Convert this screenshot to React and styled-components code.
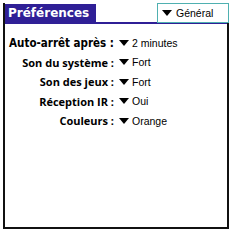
import React from 'react';
import styled, { createGlobalStyle } from 'styled-components';

const Global = createGlobalStyle`
  html, body { margin: 0; padding: 0; background: #fff; }
  body { width: 231px; height: 231px; overflow: hidden; }
`;

const rows = [
  { label: 'Auto-arrêt après', value: '2 minutes', wide: true },
  { label: 'Son du système', value: 'Fort' },
  { label: 'Son des jeux', value: 'Fort' },
  { label: 'Réception IR', value: 'Oui' },
  { label: 'Couleurs', value: 'Orange' },
];

const App = () => {
  return (
    <>
      <Global />
      <Screen>
        <Header>
          <Title>Préférences</Title>
          <Trigger>
            <Arrow />
            Général
          </Trigger>
        </Header>
        <Form>
          {rows.map((r) => (
            <React.Fragment key={r.label}>
              <Label $wide={r.wide}>{r.label} :</Label>
              <Value>
                <Arrow />
                {r.value}
              </Value>
            </React.Fragment>
          ))}
        </Form>
      </Screen>
    </>
  );
};

const Screen = styled.div`
  box-sizing: border-box;
  margin: 3px 2px 2px 3px;
  width: 226px;
  height: 226px;
  border-left: 2px solid #111;
  border-right: 2px solid #111;
  border-bottom: 2px solid #111;
  display: flex;
  flex-direction: column;
  font-family: 'DejaVu Sans', sans-serif;
  color: #000;
`;

const Header = styled.div`
  display: flex;
  align-items: flex-end;
  height: 19px;
  border-bottom: 2px solid #2f1f96;
`;

const Title = styled.div`
  background: #2f1f96;
  color: #fff;
  font-weight: bold;
  font-size: 12px;
  height: 18px;
  line-height: 18px;
  padding: 0 4px 0 3px;
  width: 84px;
`;

const Trigger = styled.div`
  align-self: flex-start;
  margin-left: auto;
  margin-right: -2px;
  margin-bottom: -1px;
  box-sizing: border-box;
  width: 72px;
  height: 20px;
  border: 1px solid #4fb0b0;
  display: flex;
  align-items: center;
  gap: 4px;
  padding: 0 3px 0 4px;
  font-size: 10.5px;
  font-family: 'Liberation Sans', Arial, sans-serif;
  background: #fff;
`;

const Arrow = styled.span`
  display: inline-block;
  width: 0;
  height: 0;
  border-left: 5px solid transparent;
  border-right: 5px solid transparent;
  border-top: 6px solid #000;
`;

const Form = styled.div`
  display: grid;
  grid-template-columns: 109px 1fr;
  grid-auto-rows: 19.5px;
  align-items: center;
  padding-top: 9px;
`;

const Label = styled.div`
  text-align: right;
  font-weight: bold;
  white-space: nowrap;
  font-size: ${(p) => (p.$wide ? '11.5px' : '11px')};
  font-family: ${(p) =>
    p.$wide ? "'DejaVu Sans Condensed', 'Liberation Sans Narrow', sans-serif" : "'Open Sans', 'DejaVu Sans', sans-serif"};
`;

const Value = styled.div`
  display: flex;
  align-items: center;
  gap: 3px;
  padding-left: 5px;
  font-size: 10.5px;
  font-family: 'Liberation Sans', Arial, sans-serif;
`;

export default App;
